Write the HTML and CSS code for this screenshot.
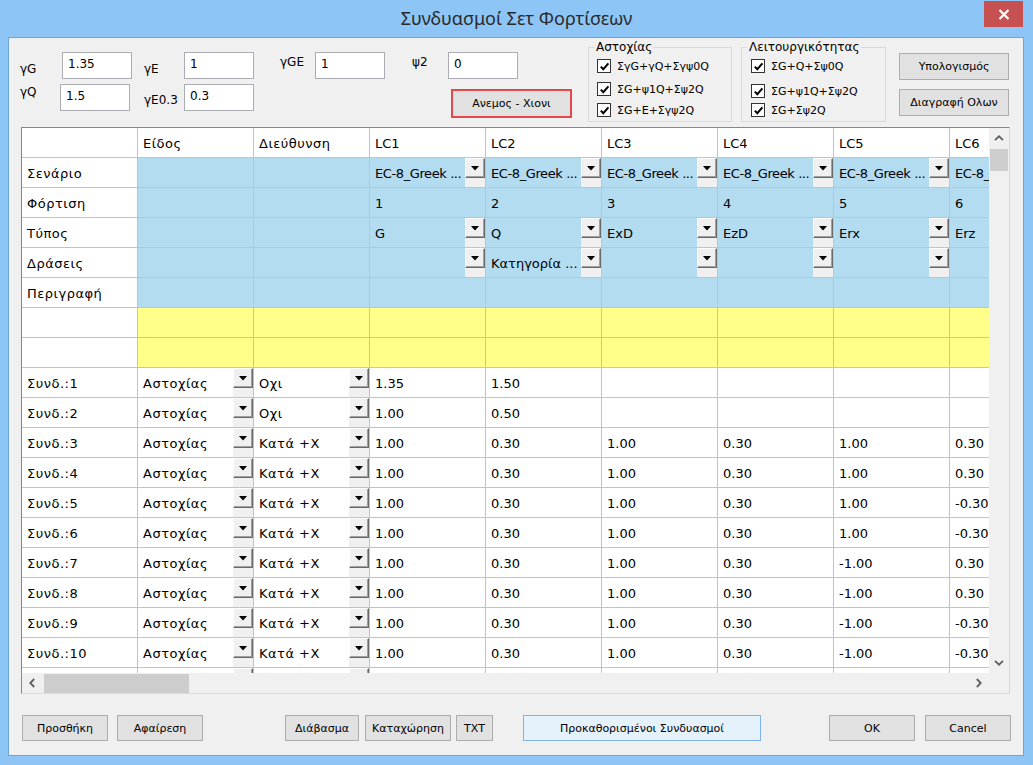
FILE: index.html
```html
<!DOCTYPE html>
<html lang="el">
<head>
<meta charset="utf-8">
<title>Συνδυασμοί Σετ Φορτίσεων</title>
<link rel="stylesheet" href="styles.css">
</head>
<body>
<div class="window">
  <div class="titlebar">
    <div class="title">Συνδυασμοί Σετ Φορτίσεων</div>
    <div class="close"><svg width="12" height="11" viewBox="0 0 12 11"><path d="M1.5 1L10.5 10M10.5 1L1.5 10" stroke="#fff" stroke-width="2.2" fill="none"/></svg></div>
  </div>
  <div class="client">
    <div class="top">
      <div class="params">
        <div class="prow1">
          <span class="lbl w42 mid">γG</span><div class="inp">1.35</div>
          <span class="lbl w40 ml12 mid">γE</span><div class="inp">1</div>
          <span class="lbl w35 ml26 hi">γGE</span><div class="inp">1</div>
          <span class="lbl w36 ml27 hi">ψ2</span><div class="inp">0</div>
        </div>
        <div class="prow2">
          <span class="lbl w40 lo0">γQ</span><div class="inp">1.5</div>
          <span class="lbl w40 ml14 lo7">γE0.3</span><div class="inp">0.3</div>
          <button class="wind">Ανεμος - Χιονι</button>
        </div>
      </div>
      <fieldset class="grp g1">
        <legend>Αστοχίας</legend>
        <div class="cbrows r1">
          <div class="cb"><span class="box"><svg width="11" height="11" viewBox="0 0 11 11"><path d="M1.8 5.6L4.3 8.2L9.4 2.4" stroke="#000" stroke-width="2" fill="none"/></svg></span>ΣγG+γQ+Σγψ0Q</div>
          <div class="cb"><span class="box"><svg width="11" height="11" viewBox="0 0 11 11"><path d="M1.8 5.6L4.3 8.2L9.4 2.4" stroke="#000" stroke-width="2" fill="none"/></svg></span>ΣG+ψ1Q+Σψ2Q</div>
          <div class="cb"><span class="box"><svg width="11" height="11" viewBox="0 0 11 11"><path d="M1.8 5.6L4.3 8.2L9.4 2.4" stroke="#000" stroke-width="2" fill="none"/></svg></span>ΣG+E+Σγψ2Q</div>
        </div>
      </fieldset>
      <fieldset class="grp g2">
        <legend>Λειτουργικότητας</legend>
        <div class="cbrows r2">
          <div class="cb"><span class="box"><svg width="11" height="11" viewBox="0 0 11 11"><path d="M1.8 5.6L4.3 8.2L9.4 2.4" stroke="#000" stroke-width="2" fill="none"/></svg></span>ΣG+Q+Σψ0Q</div>
          <div class="cb"><span class="box"><svg width="11" height="11" viewBox="0 0 11 11"><path d="M1.8 5.6L4.3 8.2L9.4 2.4" stroke="#000" stroke-width="2" fill="none"/></svg></span>ΣG+ψ1Q+Σψ2Q</div>
          <div class="cb"><span class="box"><svg width="11" height="11" viewBox="0 0 11 11"><path d="M1.8 5.6L4.3 8.2L9.4 2.4" stroke="#000" stroke-width="2" fill="none"/></svg></span>ΣG+Σψ2Q</div>
        </div>
      </fieldset>
      <div class="side">
        <button class="btn sbtn">Υπολογισμός</button>
        <button class="btn sbtn">Διαγραφή Ολων</button>
      </div>
    </div>

    <div class="gridbox">
      <div class="cells">
        <div class="row">
          <div class="c"></div><div class="c"><span class="t">Είδος</span></div><div class="c"><span class="t">Διεύθυνση</span></div>
          <div class="c"><span class="t">LC1</span></div><div class="c"><span class="t">LC2</span></div><div class="c"><span class="t">LC3</span></div><div class="c"><span class="t">LC4</span></div><div class="c"><span class="t">LC5</span></div><div class="c"><span class="t">LC6</span></div>
        </div>
        <div class="row">
          <div class="c"><span class="t">Σενάριο</span></div><div class="c b"></div><div class="c b"></div>
          <div class="c b"><span class="t ec">EC-8_Greek ...</span><span class="dd"><i></i></span></div>
          <div class="c b"><span class="t ec">EC-8_Greek ...</span><span class="dd"><i></i></span></div>
          <div class="c b"><span class="t ec">EC-8_Greek ...</span><span class="dd"><i></i></span></div>
          <div class="c b"><span class="t ec">EC-8_Greek ...</span><span class="dd"><i></i></span></div>
          <div class="c b"><span class="t ec">EC-8_Greek ...</span><span class="dd"><i></i></span></div>
          <div class="c b"><span class="t ec">EC-8_Greek ...</span><span class="dd"><i></i></span></div>
        </div>
        <div class="row">
          <div class="c"><span class="t">Φόρτιση</span></div><div class="c b"></div><div class="c b"></div>
          <div class="c b"><span class="t">1</span></div><div class="c b"><span class="t">2</span></div><div class="c b"><span class="t">3</span></div><div class="c b"><span class="t">4</span></div><div class="c b"><span class="t">5</span></div><div class="c b"><span class="t">6</span></div>
        </div>
        <div class="row">
          <div class="c"><span class="t">Τύπος</span></div><div class="c b"></div><div class="c b"></div>
          <div class="c b"><span class="t">G</span><span class="dd"><i></i></span></div>
          <div class="c b"><span class="t">Q</span><span class="dd"><i></i></span></div>
          <div class="c b"><span class="t">ExD</span><span class="dd"><i></i></span></div>
          <div class="c b"><span class="t">EzD</span><span class="dd"><i></i></span></div>
          <div class="c b"><span class="t">Erx</span><span class="dd"><i></i></span></div>
          <div class="c b"><span class="t">Erz</span><span class="dd"><i></i></span></div>
        </div>
        <div class="row">
          <div class="c"><span class="t">Δράσεις</span></div><div class="c b"></div><div class="c b"></div>
          <div class="c b"><span class="t"></span><span class="dd"><i></i></span></div>
          <div class="c b"><span class="t">Κατηγορία ...</span><span class="dd"><i></i></span></div>
          <div class="c b"><span class="t"></span><span class="dd"><i></i></span></div>
          <div class="c b"><span class="t"></span><span class="dd"><i></i></span></div>
          <div class="c b"><span class="t"></span><span class="dd"><i></i></span></div>
          <div class="c b"><span class="t"></span><span class="dd"><i></i></span></div>
        </div>
        <div class="row">
          <div class="c"><span class="t">Περιγραφή</span></div><div class="c b"></div><div class="c b"></div><div class="c b"></div><div class="c b"></div><div class="c b"></div><div class="c b"></div><div class="c b"></div><div class="c b"></div>
        </div>
        <div class="row">
          <div class="c"></div><div class="c y"></div><div class="c y"></div><div class="c y"></div><div class="c y"></div><div class="c y"></div><div class="c y"></div><div class="c y"></div><div class="c y"></div>
        </div>
        <div class="row">
          <div class="c"></div><div class="c y"></div><div class="c y"></div><div class="c y"></div><div class="c y"></div><div class="c y"></div><div class="c y"></div><div class="c y"></div><div class="c y"></div>
        </div>

        <div class="row">
          <div class="c"><span class="t">Συνδ.:1</span></div>
          <div class="c"><span class="t">Αστοχίας</span><span class="dd"><i></i></span></div>
          <div class="c"><span class="t">Οχι</span><span class="dd"><i></i></span></div>
          <div class="c"><span class="t">1.35</span></div><div class="c"><span class="t">1.50</span></div><div class="c"></div><div class="c"></div><div class="c"></div><div class="c"></div>
        </div>
        <div class="row">
          <div class="c"><span class="t">Συνδ.:2</span></div>
          <div class="c"><span class="t">Αστοχίας</span><span class="dd"><i></i></span></div>
          <div class="c"><span class="t">Οχι</span><span class="dd"><i></i></span></div>
          <div class="c"><span class="t">1.00</span></div><div class="c"><span class="t">0.50</span></div><div class="c"></div><div class="c"></div><div class="c"></div><div class="c"></div>
        </div>
        <div class="row">
          <div class="c"><span class="t">Συνδ.:3</span></div>
          <div class="c"><span class="t">Αστοχίας</span><span class="dd"><i></i></span></div>
          <div class="c"><span class="t">Κατά +Χ</span><span class="dd"><i></i></span></div>
          <div class="c"><span class="t">1.00</span></div><div class="c"><span class="t">0.30</span></div><div class="c"><span class="t">1.00</span></div><div class="c"><span class="t">0.30</span></div><div class="c"><span class="t">1.00</span></div><div class="c"><span class="t">0.30</span></div>
        </div>
        <div class="row">
          <div class="c"><span class="t">Συνδ.:4</span></div>
          <div class="c"><span class="t">Αστοχίας</span><span class="dd"><i></i></span></div>
          <div class="c"><span class="t">Κατά +Χ</span><span class="dd"><i></i></span></div>
          <div class="c"><span class="t">1.00</span></div><div class="c"><span class="t">0.30</span></div><div class="c"><span class="t">1.00</span></div><div class="c"><span class="t">0.30</span></div><div class="c"><span class="t">1.00</span></div><div class="c"><span class="t">0.30</span></div>
        </div>
        <div class="row">
          <div class="c"><span class="t">Συνδ.:5</span></div>
          <div class="c"><span class="t">Αστοχίας</span><span class="dd"><i></i></span></div>
          <div class="c"><span class="t">Κατά +Χ</span><span class="dd"><i></i></span></div>
          <div class="c"><span class="t">1.00</span></div><div class="c"><span class="t">0.30</span></div><div class="c"><span class="t">1.00</span></div><div class="c"><span class="t">0.30</span></div><div class="c"><span class="t">1.00</span></div><div class="c"><span class="t">-0.30</span></div>
        </div>
        <div class="row">
          <div class="c"><span class="t">Συνδ.:6</span></div>
          <div class="c"><span class="t">Αστοχίας</span><span class="dd"><i></i></span></div>
          <div class="c"><span class="t">Κατά +Χ</span><span class="dd"><i></i></span></div>
          <div class="c"><span class="t">1.00</span></div><div class="c"><span class="t">0.30</span></div><div class="c"><span class="t">1.00</span></div><div class="c"><span class="t">0.30</span></div><div class="c"><span class="t">1.00</span></div><div class="c"><span class="t">-0.30</span></div>
        </div>
        <div class="row">
          <div class="c"><span class="t">Συνδ.:7</span></div>
          <div class="c"><span class="t">Αστοχίας</span><span class="dd"><i></i></span></div>
          <div class="c"><span class="t">Κατά +Χ</span><span class="dd"><i></i></span></div>
          <div class="c"><span class="t">1.00</span></div><div class="c"><span class="t">0.30</span></div><div class="c"><span class="t">1.00</span></div><div class="c"><span class="t">0.30</span></div><div class="c"><span class="t">-1.00</span></div><div class="c"><span class="t">0.30</span></div>
        </div>
        <div class="row">
          <div class="c"><span class="t">Συνδ.:8</span></div>
          <div class="c"><span class="t">Αστοχίας</span><span class="dd"><i></i></span></div>
          <div class="c"><span class="t">Κατά +Χ</span><span class="dd"><i></i></span></div>
          <div class="c"><span class="t">1.00</span></div><div class="c"><span class="t">0.30</span></div><div class="c"><span class="t">1.00</span></div><div class="c"><span class="t">0.30</span></div><div class="c"><span class="t">-1.00</span></div><div class="c"><span class="t">0.30</span></div>
        </div>
        <div class="row">
          <div class="c"><span class="t">Συνδ.:9</span></div>
          <div class="c"><span class="t">Αστοχίας</span><span class="dd"><i></i></span></div>
          <div class="c"><span class="t">Κατά +Χ</span><span class="dd"><i></i></span></div>
          <div class="c"><span class="t">1.00</span></div><div class="c"><span class="t">0.30</span></div><div class="c"><span class="t">1.00</span></div><div class="c"><span class="t">0.30</span></div><div class="c"><span class="t">-1.00</span></div><div class="c"><span class="t">-0.30</span></div>
        </div>
        <div class="row">
          <div class="c"><span class="t">Συνδ.:10</span></div>
          <div class="c"><span class="t">Αστοχίας</span><span class="dd"><i></i></span></div>
          <div class="c"><span class="t">Κατά +Χ</span><span class="dd"><i></i></span></div>
          <div class="c"><span class="t">1.00</span></div><div class="c"><span class="t">0.30</span></div><div class="c"><span class="t">1.00</span></div><div class="c"><span class="t">0.30</span></div><div class="c"><span class="t">-1.00</span></div><div class="c"><span class="t">-0.30</span></div>
        </div>
        <div class="row">
          <div class="c"></div>
          <div class="c"><span class="t"></span><span class="dd"><i></i></span></div>
          <div class="c"><span class="t"></span><span class="dd"><i></i></span></div>
          <div class="c"></div><div class="c"></div><div class="c"></div><div class="c"></div><div class="c"></div><div class="c"></div>
        </div>
      </div>
      <div class="vs">
        <div class="arr"><svg width="10" height="6" viewBox="0 0 10 6"><path d="M1 5.2L5 1.3L9 5.2" stroke="#606060" stroke-width="1.8" fill="none"/></svg></div>
        <div class="vthumb"></div>
        <div class="fill"></div>
        <div class="arr"><svg width="10" height="6" viewBox="0 0 10 6"><path d="M1 0.8L5 4.7L9 0.8" stroke="#606060" stroke-width="1.8" fill="none"/></svg></div>
      </div>
      <div class="hs">
        <div class="harr"><svg width="6" height="10" viewBox="0 0 6 10"><path d="M5.2 1L1.3 5L5.2 9" stroke="#606060" stroke-width="1.8" fill="none"/></svg></div>
        <div class="hthumb"></div>
        <div class="fill"></div>
        <div class="harr"><svg width="6" height="10" viewBox="0 0 6 10"><path d="M0.8 1L4.7 5L0.8 9" stroke="#606060" stroke-width="1.8" fill="none"/></svg></div>
      </div>
      <div class="corner"></div>
    </div>

    <div class="bottom">
      <button class="btn bw86">Προσθήκη</button>
      <button class="btn bw86 ml9">Αφαίρεση</button>
      <button class="btn bw74 ml82">Διάβασμα</button>
      <button class="btn bw86 ml6">Καταχώρηση</button>
      <button class="btn bw37 ml5">TXT</button>
      <button class="btn focus bw238 ml30">Προκαθορισμένοι Συνδυασμοί</button>
      <button class="btn bw86 ml68">OK</button>
      <button class="btn bw86 ml10">Cancel</button>
    </div>
  </div>
</div>
</body>
</html>
```

FILE: styles.css
```css
* { box-sizing: border-box; }

body {
  margin: 0;
  background: #8cc5f6;
  font-family: "DejaVu Sans", "Noto Sans", sans-serif;
  color: #000;
}

.window {
  width: 1033px;
  height: 765px;
  background: #8cc5f6;
  display: flex;
  flex-direction: column;
  overflow: hidden;
}

/* ---------- title bar ---------- */
.titlebar {
  height: 37px;
  flex: none;
  display: flex;
  padding-left: 49px;
}
.title {
  flex: 1;
  text-align: center;
  font-family: "Noto Sans", "DejaVu Sans", sans-serif;
  font-size: 18px;
  line-height: 37px;
  color: #2a2a2a;
}
.close {
  width: 39px;
  height: 26px;
  margin: 1px 10px 0 0;
  background: #c75050;
  display: flex;
  align-items: center;
  justify-content: center;
}

/* ---------- client area ---------- */
.client {
  flex: 1;
  margin: 0 9px 9px 8px;
  border: 1px solid #6fa3d6;
  background: #f0f0f0;
  display: flex;
  flex-direction: column;
}

.top {
  height: 89px;
  flex: none;
  display: flex;
}

.params {
  width: 563px;
  flex: none;
  display: flex;
  flex-direction: column;
}
.prow1 { margin-top: 14px; height: 27px; display: flex; }
.prow2 { margin-top: 5px; height: 34px; display: flex; }

.lbl {
  flex: none;
  font-size: 12px;
  line-height: 15px;
}
.w42 { width: 42px; margin-left: 11px; }
.w40 { width: 40px; }
.prow2 .w40:first-child { margin-left: 11px; }
.w35 { width: 35px; }
.w36 { width: 36px; }
.ml12 { margin-left: 12px; }
.ml14 { margin-left: 14px; }
.ml26 { margin-left: 26px; }
.ml27 { margin-left: 27px; }
.mid { padding-top: 10px; }
.hi { padding-top: 3px; }
.lo0 { padding-top: 1px; }
.lo7 { padding-top: 9px; }

.inp {
  flex: none;
  width: 70px;
  height: 27px;
  border: 1px solid #abadb3;
  background: #fff;
  font-size: 12px;
  line-height: 14px;
  padding: 4px 0 0 5px;
}

.wind {
  flex: none;
  margin: 5px 0 0 197px;
  width: 121px;
  height: 29px;
  border: 2px solid #e5484a;
  background: #e1e1e1;
  font-family: inherit;
  font-size: 11px;
  color: #000;
  padding: 0;
}

/* group boxes */
.grp {
  flex: none;
  margin: 2px 0 0 16px;
  height: 82px;
  border: 1px solid #d9d9d9;
  padding: 0;
  min-width: 0;
}
.g1 { width: 144px; }
.g2 { width: 145px; margin-left: 9px; }
.grp legend {
  margin-left: 5px;
  padding: 0 2px;
  font-size: 12px;
  line-height: 14px;
}
.cbrows {
  display: grid;
  margin-top: 2px;
}
.r1 { grid-template-rows: 23px 21px 20px; padding-left: 8px; }
.r2 { grid-template-rows: 25px 19px 20px; padding-left: 9px; }
.cb {
  height: 20px;
  display: flex;
  align-items: center;
  gap: 6px;
  font-size: 11px;
  white-space: nowrap;
}
.box {
  flex: none;
  width: 14px;
  height: 14px;
  border: 1px solid #333;
  background: #fff;
  display: flex;
  align-items: center;
  justify-content: center;
}

.side {
  flex: none;
  margin: 15px 0 0 13px;
  display: flex;
  flex-direction: column;
  gap: 9px;
}

.btn {
  flex: none;
  height: 26px;
  background: #e1e1e1;
  border: 1px solid #adadad;
  font-family: inherit;
  font-size: 11px;
  color: #000;
  padding: 0;
  white-space: nowrap;
}
.sbtn { width: 110px; height: 27px; }
.focus { background: #e5f1fb; border-color: #7eb4ea; }

/* ---------- grid ---------- */
.gridbox {
  flex: none;
  margin-left: 12px;
  width: 989px;
  height: 567px;
  border: 1px solid;
  border-color: #828790 #d6d6d6 #dcdcdc #828790;
  display: grid;
  grid-template-columns: 967px 20px;
  grid-template-rows: 545px 20px;
}
.cells {
  overflow: hidden;
  background: #fff;
}
.row {
  display: flex;
  height: 30px;
}
.c {
  flex: none;
  width: 116px;
  height: 30px;
  border-right: 1px solid #c3c3c3;
  border-bottom: 1px solid #c3c3c3;
  background: #fff;
  display: flex;
  font-size: 13px;
}
.c.b { background: #b3dcf0; }
.c.y { background: #ffff8a; }
.t {
  flex: 1;
  min-width: 0;
  padding: 1px 0 0 5px;
  display: flex;
  align-items: center;
  white-space: nowrap;
  overflow: hidden;
}
.c:nth-child(-n+3) .t { letter-spacing: 0.5px; }
.t.ec { letter-spacing: -0.4px; }
.dd {
  flex: none;
  width: 20px;
  background: #f0f0f0;
}
.dd i {
  display: flex;
  align-items: center;
  justify-content: center;
  height: 20px;
  border: 1px solid;
  border-color: #fff #696969 #696969 #fff;
  box-shadow: inset -1px -1px #a0a0a0;
  background: #f0f0f0;
}
.dd i::after {
  content: "";
  width: 9px;
  height: 5px;
  background: #000;
  clip-path: polygon(0 0, 100% 0, 50% 100%);
}

.vs {
  background: #f0f0f0;
  display: flex;
  flex-direction: column;
  align-items: center;
}
.arr {
  height: 20px;
  width: 20px;
  flex: none;
  display: flex;
  align-items: center;
  justify-content: center;
}
.vthumb {
  width: 18px;
  height: 22px;
  margin-top: 1px;
  background: #cdcdcd;
  flex: none;
}
.fill { flex: 1; }

.hs {
  background: #f0f0f0;
  display: flex;
  align-items: center;
}
.harr {
  width: 20px;
  height: 20px;
  flex: none;
  display: flex;
  align-items: center;
  justify-content: center;
}
.hthumb {
  width: 145px;
  height: 19px;
  margin-left: 2px;
  background: #cdcdcd;
  flex: none;
}
.corner { background: #f0f0f0; }

/* ---------- bottom buttons ---------- */
.bottom {
  flex: none;
  margin-top: 21px;
  padding-left: 13px;
  display: flex;
  height: 26px;
}
.bw86 { width: 86px; }
.bw74 { width: 74px; }
.bw37 { width: 37px; }
.bw238 { width: 238px; }
.ml5 { margin-left: 5px; }
.ml6 { margin-left: 6px; }
.ml9 { margin-left: 9px; }
.ml10 { margin-left: 10px; }
.ml30 { margin-left: 30px; }
.ml68 { margin-left: 68px; }
.ml82 { margin-left: 82px; }
```
